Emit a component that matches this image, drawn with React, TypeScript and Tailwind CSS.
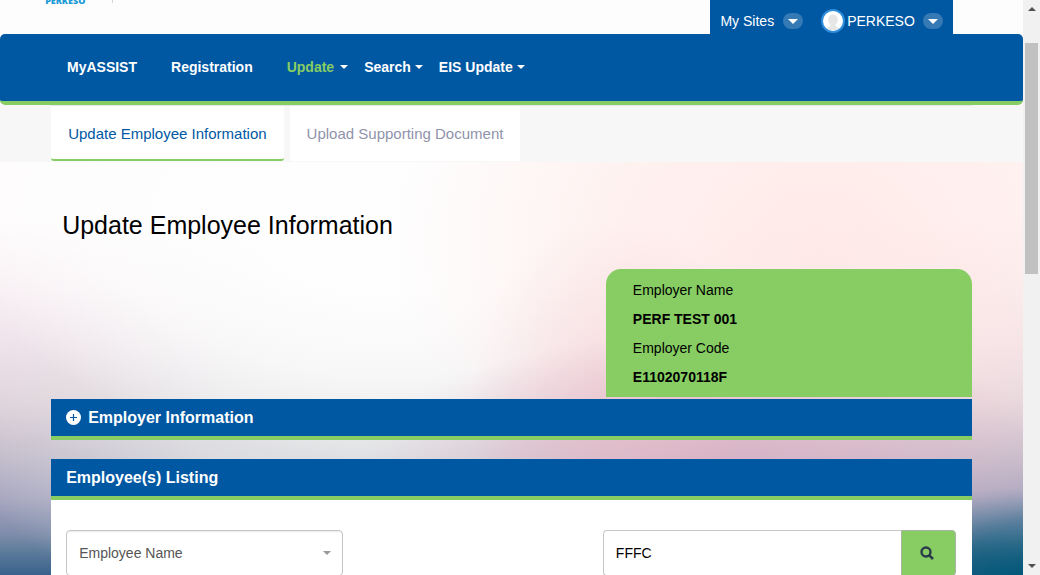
import { type ReactNode } from "react";

function Caret({ className = "" }: { className?: string }) {
  return (
    <svg viewBox="0 0 8 4" className={`h-1 w-2 ${className}`} aria-hidden="true">
      <path d="M0 0h8L4 4z" fill="currentColor" />
    </svg>
  );
}

function PillCaret() {
  return (
    <span className="flex h-4 w-5 items-center justify-center rounded-full bg-[#3579b5]">
      <svg viewBox="0 0 10 5" className="h-[5px] w-2.5" aria-hidden="true">
        <path d="M0 0h10L5 5z" fill="#fff" />
      </svg>
    </span>
  );
}

function Avatar() {
  return (
    <svg viewBox="0 0 24 24" className="size-6" aria-hidden="true">
      <circle cx="12" cy="12" r="11" fill="#fff" stroke="#2f8ddb" strokeWidth="2" />
      <path d="M12 5.500c-3 0-4.800 2-4.800 5 0 2 .6 3.600 2 4.800v2c-1 .8-2 1-3.200 2 1.800 1.500 3.500 2.200 6 2.200s4.200-.7 6-2.200c-1.200-1-2.200-1.200-3.200-2v-2c1.400-1.200 2-2.800 2-4.800 0-3-1.800-5-4.800-5z" fill="#e6e6e6" />
    </svg>
  );
}

function TopBar() {
  return (
    <header className="flex h-[34px] items-start bg-[#fefdfe]">
      <div className="mx-auto flex w-[90%] items-start justify-between">
        <div className="-ml-1.5 -mt-1 flex gap-[27px]">
          <a href="#home" className="font-['Open_Sans',sans-serif] text-[9px] leading-[10px] font-extrabold text-[#1a9ad6]">PERKESO</a>
          <span className="h-[7px] w-px bg-gray-300" />
        </div>
        <div className="mr-[19px] flex h-[34px] items-start bg-[#0058a3] px-2.5 pt-[9px] text-sm text-white">
          <button type="button" className="flex h-6 items-center gap-[9px]">My Sites <PillCaret /></button>
          <button type="button" className="ml-[18px] flex h-6 items-center gap-2">
            <span className="flex items-center gap-0.5"><Avatar />PERKESO</span>
            <PillCaret />
          </button>
        </div>
      </div>
    </header>
  );
}

function NavBar() {
  return (
    <nav className="rounded-[5px] border-b-4 border-[#87cd63] bg-[#0058a3] text-sm font-bold text-white">
      <div className="flex h-[67px] items-center pb-0.5 pl-[67px]">
        <a href="#myassist">MyASSIST</a>
        <a href="#registration" className="ml-[34px]">Registration</a>
        <button type="button" className="ml-[34px] flex items-center gap-1.5 text-[#87cd63]">Update <Caret className="text-white" /></button>
        <button type="button" className="ml-4 flex items-center gap-1">Search <Caret /></button>
        <button type="button" className="ml-4 flex items-center gap-1">EIS Update <Caret /></button>
      </div>
    </nav>
  );
}

function Tabs() {
  return (
    <div className="bg-[#f7f7f7] pb-px">
      <div className="mx-auto flex w-[90%] gap-1.5 border-t border-gray-200 text-[15px]">
        <a href="#update" className="flex h-[55px] items-center rounded-b-[3px] border-b-2 border-[#87cd63] bg-white px-[17px] pt-[3px] text-[#0058a3]">Update Employee Information</a>
        <a href="#upload" className="flex h-[55px] items-center bg-white px-[17px] pt-px text-[#8f93ab]">Upload Supporting Document</a>
      </div>
    </div>
  );
}

function PanelTitle({ children }: { children: ReactNode }) {
  return (
    <h2 className="flex h-[41px] items-center gap-2 border-b-4 border-[#87cd63] bg-[#0058a3] px-[15px] text-base font-bold text-white">
      {children}
    </h2>
  );
}

function PlusIcon() {
  return (
    <svg viewBox="0 0 16 16" className="size-4" aria-hidden="true">
      <circle cx="7.500" cy="7.500" r="7.500" fill="#fff" />
      <path d="M7.500 4v7M4 7.500h7" stroke="#0058a3" strokeWidth="1.200" />
    </svg>
  );
}

function Scrollbar() {
  return (
    <div className="flex w-[17px] shrink-0 flex-col items-center justify-between bg-[#f1f1f1] py-[7px] text-[#505050]" aria-hidden="true">
      <div className="flex flex-col items-center">
        <Caret className="rotate-180" />
        <div className="mt-8 h-[231px] w-[13px] bg-[#c1c1c1]" />
      </div>
      <Caret />
    </div>
  );
}

export default function App() {
  return (
    <div className="flex h-screen overflow-hidden bg-white font-['Liberation_Sans',Arial,sans-serif] text-black">
      <div className="min-w-0 flex-1 overflow-hidden bg-[radial-gradient(ellipse_14%_32%_at_60%_70%,#eebcc666,#eebcc633_50%,#eebcc600),radial-gradient(ellipse_34%_22%_at_70%_80%,#d9a6bf99,#d9a6bf66_45%,#d9a6bf00),radial-gradient(ellipse_42%_54%_at_80%_42%,#ffe6e3cc,#ffe6e399_40%,#ffe6e300),radial-gradient(ellipse_42%_42%_at_38%_38%,#fefefe_30%,#fefefeb3_65%,#fefefe00),radial-gradient(ellipse_38%_36%_at_34%_74%,#e8ecebcc,#e8ecebb3_35%,#e8eceb00),radial-gradient(ellipse_22%_16%_at_100%_101%,#005878,#00587800),linear-gradient(to_bottom,#fefcfd_38%,#f8f0f4_50%,#efe2ea_60%,#dfd2da_70%,#c5bccb_78%,#a5a4be_87%,#7d8caa_93%,#5c7b9b_96%,#3a618c_100%)]">
        <TopBar />
        <NavBar />
        <Tabs />
        <main className="mx-auto w-[90%]">
          <h1 className="pt-[47px] pl-[11px] text-[25px] leading-8">Update Employee Information</h1>
          <dl className="mt-7 ml-auto w-[366px] rounded-t-[15px] bg-[#87cd63] px-[27px] pt-[7px] pb-[5px] text-sm leading-[29px]">
            <dt>Employer Name</dt>
            <dd className="font-bold">PERF TEST 001</dd>
            <dt>Employer Code</dt>
            <dd className="font-bold">E1102070118F</dd>
          </dl>
          <section className="mt-0.5">
            <PanelTitle>
              <button type="button" className="flex items-center gap-1.5"><PlusIcon />Employer Information</button>
            </PanelTitle>
          </section>
          <section className="mt-[19px] bg-white">
            <PanelTitle>Employee(s) Listing</PanelTitle>
            <form className="flex justify-between px-4 pt-[30px] pb-8 pl-[15px] text-sm" onSubmit={(e) => e.preventDefault()}>
              <div className="relative w-[277px]">
                <select aria-label="Search by" className="h-[46px] w-full appearance-none rounded border border-[#c6c6c6] bg-white px-3 text-[#555] shadow-[inset_0_1px_1px_rgba(0,0,0,0.08)]">
                  <option>Employee Name</option>
                  <option>Employee Code</option>
                </select>
                <Caret className="pointer-events-none absolute top-[21px] right-3 text-[#999]" />
              </div>
              <div className="flex w-[353px]">
                <input aria-label="Search text" defaultValue="FFFC" className="h-[46px] min-w-0 flex-1 rounded-l border border-r-0 border-[#c6c6c6] bg-white px-3" />
                <button type="submit" aria-label="Search" className="flex w-[55px] items-center justify-center rounded-r border border-[#a9b3a4] bg-[#87cd63] pr-0.5">
                  <svg viewBox="0 0 14 14" className="size-3.5" fill="none" stroke="#2b3b4b" aria-hidden="true">
                    <circle cx="6" cy="6" r="4.500" strokeWidth="2.400" />
                    <path d="M9.300 9.300L13 13" strokeWidth="2.600" />
                  </svg>
                </button>
              </div>
            </form>
          </section>
        </main>
      </div>
      <Scrollbar />
    </div>
  );
}
